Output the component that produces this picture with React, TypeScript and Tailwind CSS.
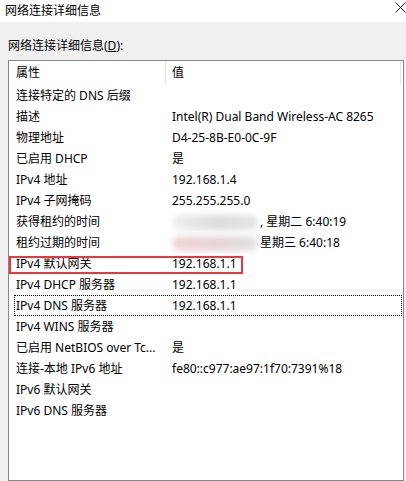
const ROWS: [string, string][] = [
  ['连接特定的 DNS 后缀', ''],
  ['描述', 'Intel(R) Dual Band Wireless-AC 8265'],
  ['物理地址', 'D4-25-8B-E0-0C-9F'],
  ['已启用 DHCP', '是'],
  ['IPv4 地址', '192.168.1.4'],
  ['IPv4 子网掩码', '255.255.255.0'],
  ['获得租约的时间', 'lease1'],
  ['租约过期的时间', 'lease2'],
  ['IPv4 默认网关', '192.168.1.1'],
  ['IPv4 DHCP 服务器', '192.168.1.1'],
  ['IPv4 DNS 服务器', '192.168.1.1'],
  ['IPv4 WINS 服务器', ''],
  ['已启用 NetBIOS over Tc...', '是'],
  ['连接-本地 IPv6 地址', 'fe80::c977:ae97:1f70:7391%18'],
  ['IPv6 默认网关', ''],
  ['IPv6 DNS 服务器', ''],
];

function Blur({ pink }: { pink?: boolean }) {
  return (
    <span className="relative inline-block w-[86px] h-[18px] mr-[2px] align-middle">
      <span
        className={
          'absolute inset-x-0 top-[2px] h-[15px] rounded-full blur-[3px] ' +
          (pink
            ? 'bg-gradient-to-r from-[#f3d3d3] via-[#e6d4d4] to-[#e2e0e0]'
            : 'bg-gradient-to-r from-[#efefef] via-[#dcdcdc] to-[#e4e4e4]')
        }
      />
    </span>
  );
}

function Value({ v }: { v: string }) {
  if (v === 'lease1')
    return (
      <span className="flex items-center">
        <Blur />
        <span>, 星期二 6:40:19</span>
      </span>
    );
  if (v === 'lease2')
    return (
      <span className="flex items-center">
        <Blur pink />
        <span>星期三 6:40:18</span>
      </span>
    );
  return <span>{v}</span>;
}

export default function App() {
  return (
    <div
      className="w-[406px] h-[481px] bg-[#f0f0f0] text-black text-[12px] overflow-hidden"
      style={{ fontFamily: '"Noto Sans", "Noto Sans CJK SC", sans-serif' }}
    >
      {/* title bar */}
      <div className="h-[22px] bg-white flex items-center justify-between pl-[5px] pr-0">
        <span className="leading-none">网络连接详细信息</span>
        <svg width="11" height="11" viewBox="0 0 11 11" className="mr-0 -mt-[8px]">
          <path d="M0.5 0.5 L10.5 10.5 M10.5 0.5 L0.5 10.5" stroke="#222" strokeWidth="1" />
        </svg>
      </div>

      <div className="px-[8px] pt-[17px]">
        <div className="h-[21px] leading-[14px]">
          网络连接详细信息(<span className="underline">D</span>):
        </div>

        <div className="w-[396px] h-[421px] bg-white border border-[#828790]">
          <div className="h-[24px] flex items-center">
            <div className="w-[157px] pl-[7px] border-r border-[#e5e5e5] h-full flex items-center">属性</div>
            <div className="flex-1 pl-[6px] border-r border-[#e5e5e5] h-full flex items-center mr-[2px]">值</div>
          </div>
          {ROWS.map(([k, v], i) => (
            <div key={i} className="relative h-[21px] flex items-center whitespace-nowrap">
              <div className="w-[157px] pl-[7px]">{k}</div>
              <div className="flex-1 pl-[6px]">
                <Value v={v} />
              </div>
              {i === 8 && (
                <div className="absolute left-0 top-[3px] w-[234px] h-[18px] border-2 border-[#e8383d]" />
              )}
              {i === 10 && (
                <div className="absolute left-[5px] right-[1px] top-0 bottom-0 border border-dotted border-black" />
              )}
            </div>
          ))}
        </div>
      </div>
    </div>
  );
}
